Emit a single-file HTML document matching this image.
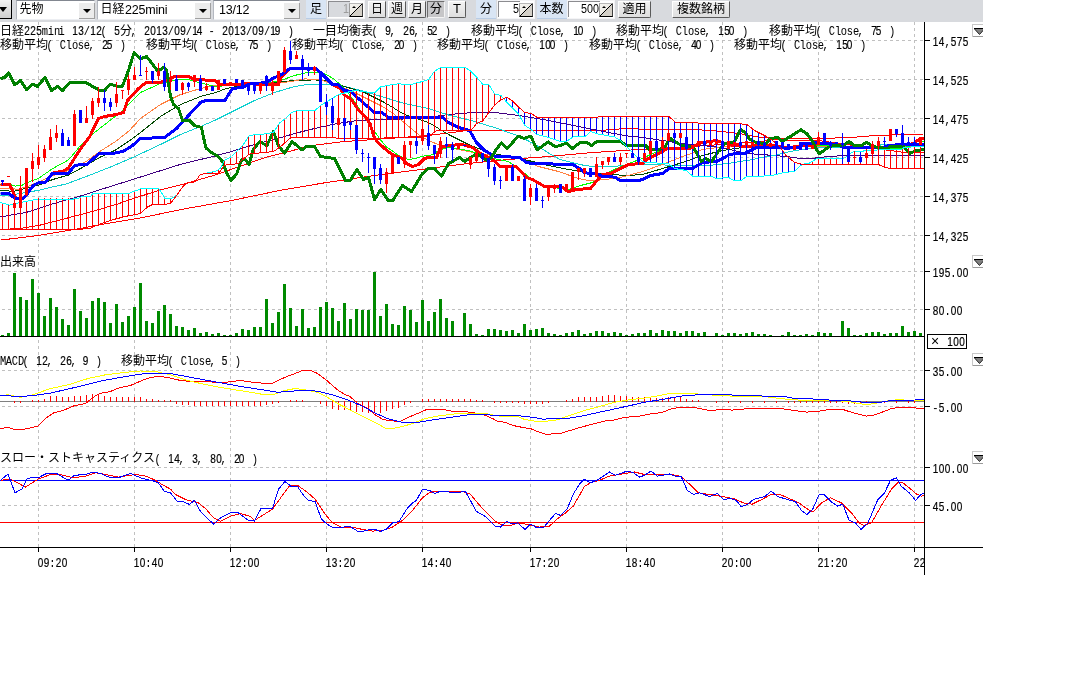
<!DOCTYPE html>
<html lang="ja">
<head>
<meta charset="utf-8">
<title>日経225mini 13/12 チャート</title>
<style>
html,body{margin:0;padding:0;background:#fff}
body{width:1070px;height:690px;overflow:hidden;position:relative;font-family:"Liberation Sans",sans-serif;font-size:12px;color:#000}
#win{position:absolute;left:0;top:0;width:983px;height:580px;overflow:hidden}
#tb{position:absolute;left:0;top:0;width:983px;height:22px;background:#d8dade;will-change:transform}
#tb *{box-sizing:border-box}
#tb>div{position:absolute}
.menu{left:0;top:0;width:12px;height:19px;background:linear-gradient(#f4f4f4,#cfcfcf);border-right:1px solid #000;border-bottom:1px solid #000}
.menu i{position:absolute;left:-1px;top:7px;border:4px solid transparent;border-top:5px solid #000;border-bottom:0}
.combo{top:0;height:20px;background:#fff;border-top:1px solid #828790;border-left:1px solid #b4b8c0;border-right:1px solid #e6e8ec;border-bottom:1px solid #eceef2}
.dd{position:absolute;right:-1px;top:2px;width:16px;height:16px;background:#ececec;border-right:1px solid #a0a0a0;border-bottom:1px solid #a0a0a0}
.dd:after{content:"";position:absolute;left:4px;top:6px;border:4px solid transparent;border-top:4px solid #000;border-bottom:0}
.ct{position:absolute;top:3px;line-height:13px;font-size:12.5px;letter-spacing:-.2px}
.cj{position:absolute;line-height:13px;font-size:12px;white-space:nowrap;font-family:"Liberation Sans","Noto Sans CJK JP",sans-serif}
.bj{font-size:12px;white-space:nowrap;font-family:"Liberation Sans","Noto Sans CJK JP",sans-serif}
.lbl{top:0;height:19px;background:#d9e5f4;border-bottom:1px solid #b9cde6}
.spin{top:0;height:19px;background:#fff;border:1px solid #f4f4f6}
.spin:before{content:"";position:absolute;left:0;top:0;right:14px;bottom:1px;border-top:1px solid #8c8c90;border-left:1px solid #8c8c90}
.spin.dis:before{background:#d8dade}
.sv{position:absolute;right:15px;top:2px;line-height:13px;font-size:12.5px;transform:scaleX(.86);transform-origin:100% 0}
.sb{position:absolute;right:1px;top:2px;width:14px;height:14px;background:linear-gradient(135deg,#f6f5f1 0,#eeece6 46%,#000 46%,#000 53%,#d4d0c8 53%);border-right:1px solid #404040;border-bottom:1px solid #000;border-top:1px solid #b8b8b8;border-left:1px solid #9a9a9a}
.sb:after{content:"";position:absolute;left:2px;top:2px;border:2px solid transparent;border-bottom:2px solid #000;border-top:0}
.btn{top:1px;height:17px;background:linear-gradient(#f2f2f2,#dedede);border-top:1px solid #fff;border-left:1px solid #fff;border-right:1px solid #5a5a5a;border-bottom:1px solid #5a5a5a;border-radius:0 0 2px 0;text-align:center;line-height:14px;font-size:13px}
.btn.on{background:#c6c6c8;border-top:1px solid #6e6e6e;border-left:1px solid #6e6e6e;border-right:1px solid #f4f4f4;border-bottom:1px solid #f4f4f4}
svg{position:absolute;left:0;top:0}
#win>svg{will-change:transform}
.t text{font-family:"Liberation Sans",sans-serif;font-size:12.5px;text-anchor:middle;fill:#000;stroke:#000;stroke-width:.2px}
.t .l{font-family:"Liberation Mono",monospace;font-size:13px;stroke-width:.05px}
.tj text{font-family:"Liberation Sans","Noto Sans CJK JP",sans-serif;font-size:12px;fill:#000}
</style>
</head>
<body>
<div id="win">
<div id="tb">
<div class="menu"><i></i></div>
<div class="combo" style="left:16px;width:79px"><span class="cj" style="left:2.5px;top:1.5px">先物</span><i class="dd"></i></div>
<div class="combo" style="left:97px;width:114px"><span class="cj" style="left:2.5px;top:1.5px">日経</span><span class="ct" style="left:27px">225mini</span><i class="dd"></i></div>
<div class="combo" style="left:213px;width:87px"><span class="ct" style="left:5px">13/12</span><i class="dd"></i></div>
<div class="lbl" style="left:306px;width:20px"><span class="cj" style="left:4px;top:2.5px">足</span></div>
<div class="spin dis" style="left:327px;width:38px"><span class="sv" style="color:#9c9c9c">1</span><i class="sb"></i></div>
<div class="btn" style="left:368px;width:18px"><span class="bj">日</span></div>
<div class="btn" style="left:388px;width:18px"><span class="bj">週</span></div>
<div class="btn" style="left:408px;width:18px"><span class="bj">月</span></div>
<div class="btn on" style="left:427px;width:18px"><span class="bj">分</span></div>
<div class="btn" style="left:448px;width:18px">T</div>
<div class="lbl" style="left:476px;width:20px"><span class="cj" style="left:4px;top:2.5px">分</span></div>
<div class="spin" style="left:497px;width:38px"><span class="sv">5</span><i class="sb"></i></div>
<div class="lbl" style="left:537px;width:30px"><span class="cj" style="left:2.5px;top:2.5px">本数</span></div>
<div class="spin" style="left:567px;width:48px"><span class="sv">500</span><i class="sb"></i></div>
<div class="btn" style="left:618px;width:33px"><span class="bj">適用</span></div>
<div class="btn" style="left:672px;width:58px"><span class="bj">複数銘柄</span></div>
</div>
<svg width="983" height="580" viewBox="0 0 983 580" shape-rendering="crispEdges">
<path d="M2 40.5H924M2 79.5H924M2 118.5H924M2 157.5H924M2 196.5H924M2 235.5H924M2 271.5H924M2 309.5H924M2 370.5H924M2 406.5H924M2 467.5H924M2 505.5H924M38.5 22V547M134.5 22V547M230.5 22V547M326.5 22V547M422.5 22V547M530.5 22V547M626.5 22V547M722.5 22V547M818.5 22V547M914.5 22V547" stroke="#c0c0c0" stroke-width="1" stroke-dasharray="3 3" fill="none"/>
<polyline points="0.5,240.1 38.5,235.5 74.5,229.5 112.5,222.5 140.5,218 181,209.5 231.5,200.5 281.9,190 326.5,182.5 374.5,175.5 428.5,168.5 468.5,163.5 508.5,159.5 548.5,156.5 588.5,152.9 628.5,150.1 642.5,149.5 700.5,146 760.5,141.5 770.5,139.9 790.5,140.1 819.5,140.7 842.5,144 870.5,148 894.2,151 900.8,152 913.5,152.8 924,152.8" fill="none" stroke="#ff0000" stroke-width="1"/>
<polyline points="0.5,229.5 20.5,228.5 40.5,225 58.1,220.5 92.1,211.5 118.3,203.8 130.5,199.5 159.1,190.3 186,183.5 214.5,175.2 231.5,169.3 265.1,157.5 285.3,152.5 310.5,145.7 344.5,141.5 374.5,139.5 428.5,135.5 470.5,130.1 604.5,130.1 628.5,128.3 640.5,129.1 689.5,129.1 722.5,131.5 743.5,134.2 750.5,135.8 762.5,137.5 782.5,138.5 819.5,138.5 851.2,137.5 875.2,135.5 924,134" fill="none" stroke="#ff0000" stroke-width="1"/>
<polyline points="0.5,216.9 26.7,212.3 52.8,203.8 79,196.5 105.2,188.1 130.5,180.2 181,164.2 214.5,156.1 231.5,151.5 254.5,144.5 281.9,137.3 294.5,133.5 314.5,128.5 334.5,124.1 354.5,120.9 374.5,119.5 394.5,119.5 428.5,117.5 448.5,114.5 468.5,112.9 498.5,112.9 518.5,115.5 548.5,120.5 578.5,126.5 608.5,132.5 628.5,136.1 642.5,137.5 662.5,140.5 681.5,143.5 702.2,145.5 722.5,147.7 733,150.2 745.5,153.4 766.1,154.9 786.5,156.5 796.9,158 815.5,158 822.5,157.1 843.5,155.5 924,155.5" fill="none" stroke="#400080" stroke-width="1"/>
<polyline points="0.5,196 13.5,194.5 26.7,192.5 39.8,190 52.8,186.8 65.9,184.1 92.1,174.3 111.7,166.5 130.5,158.5 160.5,144.5 180.5,134.5 200.5,126.5 214.5,120.5 234.5,110.5 254.5,100.5 274.5,92.5 294.5,86.5 310.5,84.1 326.5,84.1 344.5,86.5 364.5,91.5 384.5,97.5 404.5,103.5 428.5,108.5 448.5,115 471.9,120.8 495.1,127.7 518.3,135.9 528.5,141 538.5,146.5 548.5,153 560.5,159.7 570.5,162.2 581.1,164.8 591.3,166.3 601.5,166.9 611.9,166.3 622.2,165.8 632.5,164.8 642.5,164.3 667.5,165.1 691.5,165.7 712.5,165.1 727.5,163.5 743.5,161 750.5,159.9 762.5,157.3 776.5,154.9 786.5,152.4 796.9,150.3 807.2,148.8 818.5,147.8 842.5,147.7 872.5,147.5 880.5,145 900.5,144.7 924,144.5" fill="none" stroke="#10d0d0" stroke-width="1"/>
<polyline points="0.5,190.5 13.5,191.3 26.7,188.1 39.8,184.8 52.8,179.5 68.5,175 85.5,165.8 99.9,157.3 115.5,150.1 131.3,139.5 140.5,132.5 160.5,116.5 180.5,104.5 200.5,96.5 214.5,92.9 226.5,88.5 244.5,84.9 274.5,82.5 294.5,80.5 314.5,79.9 326.5,80.9 344.5,86.5 364.5,92.5 384.5,102.5 404.5,114.5 428.5,122.5 448.5,134.5 468.5,144.5 488.5,152.5 508.5,156.5 528.5,160.5 548.5,165.5 568.5,169.5 588.5,172.5 608.5,174.5 628.5,175.5 642.5,174.5 662.5,168.5 682.5,162.5 702.5,155.5 722.5,150.5 742.5,147.5 770.5,146.5 820.5,146.5 870.5,146.5 924,146.5" fill="none" stroke="#004800" stroke-width="1"/>
<polyline points="0.5,188.7 8.4,188.1 17.5,189.4 26.7,186.8 39.8,181.5 52.8,175.5 65.9,171.7 75.1,167.1 85.5,161.9 99.9,151.5 115.5,141.5 128.7,131.2 140.5,118.5 160.5,104.5 180.5,94.5 200.5,88.5 214.5,85.5 234.5,84.1 264.5,84.1 280.5,82.9 294.5,80.9 304.5,78.9 318.5,79.5 334.5,84.1 350.5,90.5 366.5,98.5 382.5,106.5 394.5,114.5 406.5,124.5 418.5,134.5 428.5,140.5 440.5,145.5 458.5,149.5 478.5,153.5 498.5,156.5 518.5,158.5 538.5,166.5 558.5,171.5 578.5,178.5 588.5,180.5 602.5,179.9 620.5,177.5 642.5,171.5 662.5,164.5 682.5,156.5 702.5,149.5 722.5,146.9 760.5,146.5 820.5,146.5 870.5,147.5 924,146.5" fill="none" stroke="#ff8040" stroke-width="1"/>
<polyline points="0.5,184.5 9.7,184.1 14.9,186.1 21.5,185.5 26.7,182.8 38.5,178.3 52.8,168.5 68.5,159.9 75.1,152.1 81.5,144.2 94.5,132.5 112.5,118.5 120.5,112.5 140.5,92.5 160.5,83.5 174.5,80.1 188.5,79.7 214.5,86.5 230.5,85.5 260.5,84.5 280.5,80.5 294.5,75.5 308.5,72.1 318.5,72.1 326.5,74.5 334.5,79.5 344.5,88.5 348.5,93.5 351.8,97.9 356.2,104 364.5,117.5 373.5,130.5 375.2,132.5 381.3,140.8 386.5,146.9 392.5,151.1 399.8,156.2 408.1,159.3 414.2,158.8 422.5,156.2 432.7,154.7 437.9,151.1 443,149 449.2,147.5 468.5,150.5 488.5,157.5 508.5,161.5 518.5,168.5 528.5,176.5 540.5,184.5 552.5,187.5 568.5,189.5 580.5,185.5 592.5,182.5 604.5,174.5 616.5,168.5 628.5,163.5 642.5,158.5 652.5,153.5 662.5,149.5 690.5,148 700.5,143.5 716.5,141.5 732.5,145.5 762.5,145.5 800.5,146.5 830.5,145.5 860.5,146.5 890.5,148 901.5,148 912.5,145.5 924,140.9" fill="none" stroke="#00ff00" stroke-width="1"/>
<polyline points="0.5,184.8 9.7,184.8 14.9,195.9 16.2,198.5 22.7,198.5 26.7,194.5 33.2,185.5 38.5,182.8 45,182.8 52.8,173 63.3,171.1 68.5,167.8 75.1,157.3 81.5,147.5 89.5,137 98.5,118.5 104.5,116.5 116.5,114.5 123.5,112.5 127.5,100.5 138.5,88.5 145.5,82.9 160.5,82.5 170.5,78.5 174.5,76.5 188.5,76.5 194.5,79.5 214.5,80.5 220.5,84.9 234.5,84.9 246.5,83.5 266.5,84.9 278.5,84.5 281.5,76.5 284.5,73.5 290.5,68.1 315.5,68.1 322.5,74.5 332.5,84.5 340.1,88.3 344.7,95.2 350.5,98.7 354,103.3 358.5,110.3 365.5,117.2 370.2,124.2 373.7,135.8 377.2,141.5 384.5,148.5 390.5,153.2 394.5,155.5 402.5,158.5 406.5,163.5 412.5,166.5 418.5,164.5 424.5,158.5 428.5,157.5 436.5,157.5 440.5,147.5 448.5,145.5 462.5,144.5 472.5,147.5 480.5,153.5 492.5,159.5 500.5,166.5 516.5,166.9 526.5,177.5 532.5,179.5 544.5,186.5 560.5,186.1 568.5,191.5 576.5,189.5 590.5,188.5 598.5,178.5 602.5,174.5 610.5,173.5 620.5,168.5 628.5,164.5 642.5,163.5 648.5,158.5 660.5,152.5 667.5,148.5 690.5,148.1 700.5,142.9 716.5,140.5 722.5,142.5 732.5,145.5 746.5,146.5 762.5,145.5 778.5,146.1 786.5,147.5 794.8,146.9 803.1,145.2 813.5,145.2 818.5,143.1 836.5,144.3 842.5,146.9 846,147.7 884.5,148 887.5,145.9 897.1,144.8 910.5,144.5 915,142.5 920,138.5 924,138.5" fill="none" stroke="#ff0000" stroke-width="2.2" stroke-linejoin="round" shape-rendering="auto"/>
<polyline points="0.5,184.8 9.7,184.8 14.9,195.9 16.2,198.5 22.7,198.5 26.7,194.5 33.2,185.5 38.5,182.8 45,182.8 52.8,173 63.3,171.1 68.5,167.8 75.1,157.3 81.5,147.5 89.5,137 98.5,118.5 104.5,116.5 116.5,114.5 123.5,112.5 127.5,100.5 138.5,88.5 145.5,82.9 160.5,82.5 170.5,78.5 174.5,76.5 188.5,76.5 194.5,79.5 214.5,80.5 220.5,84.9 234.5,84.9 246.5,83.5 266.5,84.9 278.5,84.5 281.5,76.5 284.5,73.5 290.5,68.1 315.5,68.1 322.5,74.5 332.5,84.5 340.1,88.3 344.7,95.2 350.5,98.7 354,103.3 358.5,110.3 365.5,117.2 370.2,124.2 373.7,135.8 377.2,141.5 384.5,148.5 390.5,153.2 394.5,155.5 402.5,158.5 406.5,163.5 412.5,166.5 418.5,164.5 424.5,158.5 428.5,157.5 436.5,157.5 440.5,147.5 448.5,145.5 462.5,144.5 472.5,147.5 480.5,153.5 492.5,159.5 500.5,166.5 516.5,166.9 526.5,177.5 532.5,179.5 544.5,186.5 560.5,186.1 568.5,191.5 576.5,189.5 590.5,188.5 598.5,178.5 602.5,174.5 610.5,173.5 620.5,168.5 628.5,164.5 642.5,163.5 648.5,158.5 660.5,152.5 667.5,148.5 690.5,148.1 700.5,142.9 716.5,140.5 722.5,142.5 732.5,145.5 746.5,146.5 762.5,145.5 778.5,146.1 786.5,147.5 794.8,146.9 803.1,145.2 813.5,145.2 818.5,143.1 836.5,144.3 842.5,146.9 846,147.7 884.5,148 887.5,145.9 897.1,144.8 910.5,144.5 915,142.5 920,138.5 924,138.5" fill="none" stroke="#ff0000" stroke-width="3" stroke-linejoin="round"/>
<polyline points="0.5,193.3 9,193.3 14.9,198.5 22.7,198.5 26.7,194.5 33.2,185.5 38.5,182.8 45,182.8 52.8,173 68.5,173 75.1,165.2 86.9,164.5 98.5,154 111.5,153.8 123.5,151.2 132.5,145.5 140.5,138.5 164.5,137.5 176.5,128.5 200.5,102.5 204.5,100.9 224.5,100.9 232.5,88.5 242.5,87.5 249.5,84.1 266.5,82.5 272.5,78.5 282.5,74.1 290.5,68.1 315.5,68.1 322.5,74.5 332.5,84.5 338.5,84.9 344.5,90.5 350.5,91.5 374.5,112.5 382.5,112.9 388.5,117.5 442.5,117.5 448.5,122.5 458.5,127.5 469.5,130.5 476.5,142.5 484.5,150.5 494.5,156.1 519.5,157.5 526.5,162.5 532.5,163.5 572.5,164.5 579.5,168.5 584.5,172.9 596.5,173.5 602.5,176.5 614.5,177.1 620.5,180.5 638.5,180.5 642.5,179.5 650.5,175.5 662.5,173.5 669.5,168.5 692.5,168.5 702.5,162.5 716.5,161.5 722.5,158.5 730.5,154.1 744.5,153.5 756.5,147.5 788.5,148.1 800.5,147.5 802.5,143.5 816.5,142.9 836.5,144.3 842.5,146.9 846,147.7 884.5,148 887.5,145.9 897.1,144.8 924,144.3" fill="none" stroke="#0000ff" stroke-width="2.2" stroke-linejoin="round" shape-rendering="auto"/>
<polyline points="0.5,193.3 9,193.3 14.9,198.5 22.7,198.5 26.7,194.5 33.2,185.5 38.5,182.8 45,182.8 52.8,173 68.5,173 75.1,165.2 86.9,164.5 98.5,154 111.5,153.8 123.5,151.2 132.5,145.5 140.5,138.5 164.5,137.5 176.5,128.5 200.5,102.5 204.5,100.9 224.5,100.9 232.5,88.5 242.5,87.5 249.5,84.1 266.5,82.5 272.5,78.5 282.5,74.1 290.5,68.1 315.5,68.1 322.5,74.5 332.5,84.5 338.5,84.9 344.5,90.5 350.5,91.5 374.5,112.5 382.5,112.9 388.5,117.5 442.5,117.5 448.5,122.5 458.5,127.5 469.5,130.5 476.5,142.5 484.5,150.5 494.5,156.1 519.5,157.5 526.5,162.5 532.5,163.5 572.5,164.5 579.5,168.5 584.5,172.9 596.5,173.5 602.5,176.5 614.5,177.1 620.5,180.5 638.5,180.5 642.5,179.5 650.5,175.5 662.5,173.5 669.5,168.5 692.5,168.5 702.5,162.5 716.5,161.5 722.5,158.5 730.5,154.1 744.5,153.5 756.5,147.5 788.5,148.1 800.5,147.5 802.5,143.5 816.5,142.9 836.5,144.3 842.5,146.9 846,147.7 884.5,148 887.5,145.9 897.1,144.8 924,144.3" fill="none" stroke="#0000ff" stroke-width="3" stroke-linejoin="round"/>
<polyline points="0.5,78.5 4.5,77.5 8.9,72.9 14.5,84.9 20.5,80.5 26.5,89.5 32.5,84.1 37.5,86.5 44.9,77.5 51.5,90.5 57.5,86.5 62.5,90.5 69.5,82.9 86.5,82.9 94.5,87.5 100.5,90.9 104.5,90.5 110.5,84.1 117.5,86.5 122.5,86.1 128.5,70.5 134.1,52.5 140.5,58.9 146.5,56.5 150.5,61.5 158,71.5 164,67 166.5,70.5 168,78.5 169.5,90.5 171,97.5 173.5,104.5 178.5,108.5 182.5,120.5 189.5,120.5 194.5,125.5 201.5,127.5 203.5,137.5 206,148 211.5,152.5 218,156.5 222.5,161.5 226.5,172.5 230.9,180.2 236.5,174.3 241.5,160 244.9,158.9 249.1,164.5 253.3,149.1 260,141.5 266.8,145.7 273.5,131.5 278.5,145.7 284.5,153.3 292,141.5 302.1,149.9 306.5,146.5 314.5,146.5 320.5,156.5 334.5,158.5 345.5,180.5 350.5,180.1 356.9,169.5 363.5,179.5 368.5,177.5 374.5,199.5 380.9,189.5 388.5,200.9 392.5,200.9 402.5,185.5 411.5,191.5 422.5,173.5 428.5,168.5 434.5,168.5 441.5,176.1 448.5,163.5 455.5,159.8 459.5,157.5 464.8,161.5 470.5,157.5 476.4,154 482.2,156.9 486.8,160.5 491.5,157.5 496.1,149.5 501.3,143 507.1,148.8 518.1,136.1 523.9,138.4 530.8,136.1 537.2,150 548.2,141.9 555.2,146.5 560.5,145.5 566.5,142.9 572.5,148.5 580.5,142.1 586.5,142.1 591.5,145.5 596.5,141.7 621.2,141.7 626.3,145.8 645.8,145.8 649.9,149.9 659.2,149.9 665.5,145.8 670.3,138.4 675.5,141.9 681.5,145.5 691.9,146.5 696,151.2 701.2,161.5 705.3,158.4 711.5,161.5 716.5,154.3 722.7,145 727.9,142.5 734.1,141.9 740.7,129.5 745.5,132.8 749.5,139 755.8,142.5 766.1,143.5 770.2,138.5 777.4,137.5 782.5,141.1 788.7,137.5 801,129.8 807.2,133.9 812.3,141.1 817.5,151.3 819.5,153.9 827.7,147.7 832.9,145.2 843.2,145.2 849.3,141.5 853.5,145.2 861.2,145.9 866.5,142.1 873.1,146.5 887.5,148.8 890.5,146.5 903.5,146.5 909.5,153.5 916.2,150.5 924,149.5" fill="none" stroke="#008000" stroke-width="2.2" stroke-linejoin="round" shape-rendering="auto"/>
<polyline points="0.5,78.5 4.5,77.5 8.9,72.9 14.5,84.9 20.5,80.5 26.5,89.5 32.5,84.1 37.5,86.5 44.9,77.5 51.5,90.5 57.5,86.5 62.5,90.5 69.5,82.9 86.5,82.9 94.5,87.5 100.5,90.9 104.5,90.5 110.5,84.1 117.5,86.5 122.5,86.1 128.5,70.5 134.1,52.5 140.5,58.9 146.5,56.5 150.5,61.5 158,71.5 164,67 166.5,70.5 168,78.5 169.5,90.5 171,97.5 173.5,104.5 178.5,108.5 182.5,120.5 189.5,120.5 194.5,125.5 201.5,127.5 203.5,137.5 206,148 211.5,152.5 218,156.5 222.5,161.5 226.5,172.5 230.9,180.2 236.5,174.3 241.5,160 244.9,158.9 249.1,164.5 253.3,149.1 260,141.5 266.8,145.7 273.5,131.5 278.5,145.7 284.5,153.3 292,141.5 302.1,149.9 306.5,146.5 314.5,146.5 320.5,156.5 334.5,158.5 345.5,180.5 350.5,180.1 356.9,169.5 363.5,179.5 368.5,177.5 374.5,199.5 380.9,189.5 388.5,200.9 392.5,200.9 402.5,185.5 411.5,191.5 422.5,173.5 428.5,168.5 434.5,168.5 441.5,176.1 448.5,163.5 455.5,159.8 459.5,157.5 464.8,161.5 470.5,157.5 476.4,154 482.2,156.9 486.8,160.5 491.5,157.5 496.1,149.5 501.3,143 507.1,148.8 518.1,136.1 523.9,138.4 530.8,136.1 537.2,150 548.2,141.9 555.2,146.5 560.5,145.5 566.5,142.9 572.5,148.5 580.5,142.1 586.5,142.1 591.5,145.5 596.5,141.7 621.2,141.7 626.3,145.8 645.8,145.8 649.9,149.9 659.2,149.9 665.5,145.8 670.3,138.4 675.5,141.9 681.5,145.5 691.9,146.5 696,151.2 701.2,161.5 705.3,158.4 711.5,161.5 716.5,154.3 722.7,145 727.9,142.5 734.1,141.9 740.7,129.5 745.5,132.8 749.5,139 755.8,142.5 766.1,143.5 770.2,138.5 777.4,137.5 782.5,141.1 788.7,137.5 801,129.8 807.2,133.9 812.3,141.1 817.5,151.3 819.5,153.9 827.7,147.7 832.9,145.2 843.2,145.2 849.3,141.5 853.5,145.2 861.2,145.9 866.5,142.1 873.1,146.5 887.5,148.8 890.5,146.5 903.5,146.5 909.5,153.5 916.2,150.5 924,149.5" fill="none" stroke="#008000" stroke-width="3" stroke-linejoin="round"/>
<path d="M2.5 203V230M8.5 204V230M14.5 203V230M20.5 202V230M26.5 201V230M32.5 200V230M38.5 198V230M44.5 198V230M50.5 198V230M56.5 198V230M62.5 198V230M68.5 198V230M74.5 198V230M80.5 197V230M86.5 196V229M92.5 193V228M98.5 193V225M104.5 193V223M110.5 193V221M116.5 193V219M122.5 193V218M128.5 193V216M134.5 191V215M140.5 188V214M146.5 188V208M152.5 188V205M158.5 188V205M164.5 197V205M170.5 198V204M212.5 171V174M218.5 169V174M224.5 160V166M230.5 157V165M236.5 151V164M242.5 145V160M248.5 136V155M254.5 134V154M260.5 134V153M266.5 133V153M272.5 132V152M278.5 124V149M284.5 119V144M290.5 113V138M296.5 110V138M302.5 110V138M308.5 110V138M314.5 110V138M320.5 105V138M326.5 101V138M332.5 98V138M338.5 94V139M344.5 92V139M350.5 91V139M356.5 90V139M362.5 91V139M368.5 92V139M374.5 92V139M380.5 86V139M386.5 85V138M392.5 84V138M398.5 83V138M404.5 84V138M410.5 84V138M416.5 82V138M422.5 81V137M428.5 79V137M434.5 71V133M440.5 67V131M446.5 67V131M452.5 67V131M458.5 67V131M464.5 67V131M470.5 71V131M476.5 77V124M482.5 84V121M488.5 84V113M494.5 93V106M500.5 95V101M812.5 161V165M818.5 158V165M824.5 158V165M830.5 158V165M836.5 158V165M842.5 158V165M848.5 154V165M854.5 151V165M860.5 151V165M866.5 150V165M872.5 150V165M878.5 149V165M884.5 149V168M890.5 149V169M896.5 149V169M902.5 148V169M908.5 147V169M914.5 146V169M920.5 146V169" stroke="#ff0000" stroke-width="1" fill="none"/>
<path d="M506.5 97V103M512.5 101V109M518.5 106V115M524.5 112V125M530.5 113V130M536.5 116V135M542.5 117V136M548.5 117V138M554.5 117V140M560.5 117V142M566.5 117V142M572.5 117V138M578.5 117V137M584.5 117V137M590.5 117V132M596.5 117V134M602.5 117V135M608.5 116V136M614.5 116V137M620.5 116V141M626.5 116V147M632.5 116V153M638.5 116V159M644.5 116V163M650.5 116V163M656.5 116V163M662.5 116V164M668.5 116V164M674.5 121V169M680.5 122V170M686.5 122V171M692.5 122V177M698.5 123V177M704.5 123V177M710.5 123V177M716.5 123V179M722.5 123V179M728.5 123V178M734.5 123V181M740.5 123V181M746.5 124V177M752.5 128V177M758.5 132V177M764.5 135V176M770.5 139V176M776.5 143V175M782.5 150V173M788.5 157V173M794.5 162V172M800.5 163V166" stroke="#0000ff" stroke-width="1" fill="none"/>
<polyline points="0.5,202.5 9.7,205.1 20.1,202.5 38.5,199 73.5,199 77.5,198.7 81.5,196.6 90.5,196.6 93,193.1 129.5,193.1 135.1,191 140.5,188.9 159.1,188.9 165,198.5 170.9,198.5 176.5,195.5 182.5,187 187.5,182.5 195.5,181.9 199.5,175.2 204.5,173.5 214.5,171.5 219.5,169.5 224.5,160.5 231.5,156.5 238.2,149.9 243.2,144.9 249.1,135.5 255,134.8 261.5,134.5 273.5,132.3 279.5,123 285.5,118.5 291.5,112.5 296.5,110.9 314.5,110.9 320.5,105.5 338.5,94.5 354.5,90.5 374.5,93 380.5,87 386.5,85.7 392.5,84.4 399.5,83.8 404.8,84.7 410.9,84.7 417,82.7 423.1,81.5 428.5,79.5 434.5,71.3 440.9,67.3 464.9,67.3 470.9,71.3 476.9,77.5 482.9,84.5 488.9,84.9 494.9,94.1 500.9,95.5 506.9,102.5 512.9,108.5 518.9,114.5 524.9,125.5 530.9,129.5 536.9,134.5 548.9,137.5 560.5,141.5 566.5,141.5 572.9,136.9 584.5,136.9 590.9,131.5 598.5,134.1 614.5,136.9 620.5,140.5 632.5,152.5 638.5,158.5 644.5,162.5 668.5,163.5 674.5,168.5 686.5,170.5 692.5,176.1 710.5,176.1 716.5,178.5 728.5,177.5 734.5,180.9 740.5,180.9 746.5,176.5 770.5,175.8 782.5,172.8 794.5,171.3 801.9,164.5 809.4,163.1 816.9,158.5 844.9,158 847.2,155.9 851.9,152.5 854.3,151.7 862.5,151.7 864.5,150.3 875.5,150.3 878.5,149.8 888.5,149.5 901.5,149.5 904.5,147.1 924,146.8" fill="none" stroke="#00ffff" stroke-width="1"/>
<polyline points="0.5,229.5 76.2,229.8 90.2,228.2 98.5,224.7 112.5,219.8 126.5,216.2 140.5,213.5 147.3,207.1 152.5,204.5 165,204.5 170.9,202.9 176.5,195.5 182.5,187 187.5,182.5 195.5,181.9 199.5,175.2 204.5,173.5 218.5,173.5 224.5,165.1 231.5,164.5 238.2,163.5 249.1,154.1 273.5,151.5 279.5,147.5 291.2,137.3 310.5,137.3 354.5,138.5 414.5,137.5 428.5,136.5 436.5,130.5 471.3,130.1 476.5,123.7 482.9,120.8 488.7,112.7 495.1,104.5 500.9,99.9 506.7,97 512.5,101.1 524.6,112.7 531,113.3 536.8,117.1 669.5,116.9 675.5,122.5 746.5,124.1 754.5,130.5 766.5,136.5 772.5,140.5 779.5,145.9 785.5,154.9 794.5,162.4 803.5,164.5 878.2,164.5 884.1,166.9 890.1,168.5 924,168.5" fill="none" stroke="#ff0000" stroke-width="1"/>
<path d="M7 176h3V177h-3ZM13 203h3V208h-3ZM14 197h1V203h-1ZM19 188h3V208h-3ZM20 176h1V188h-1ZM25 168h3V195h-3ZM26 195h1V196h-1ZM31 161h3V169h-3ZM32 153h1V161h-1ZM32 169h1V182h-1ZM37 157h3V165h-3ZM38 145h1V157h-1ZM38 165h1V169h-1ZM43 149h3V158h-3ZM44 145h1V149h-1ZM44 158h1V162h-1ZM49 137h3V150h-3ZM50 129h1V137h-1ZM55 133h3V138h-3ZM56 125h1V133h-1ZM56 138h1V142h-1ZM73 114h3V146h-3ZM74 110h1V114h-1ZM85 118h3V123h-3ZM86 106h1V118h-1ZM91 101h3V115h-3ZM92 98h1V101h-1ZM92 115h1V119h-1ZM97 98h3V103h-3ZM98 87h1V98h-1ZM98 103h1V107h-1ZM115 94h3V103h-3ZM116 82h1V94h-1ZM116 103h1V107h-1ZM121 90h3V91h-3ZM122 91h1V99h-1ZM127 79h3V90h-3ZM128 75h1V79h-1ZM128 90h1V95h-1ZM133 75h3V80h-3ZM134 67h1V75h-1ZM145 71h3V72h-3ZM146 67h1V71h-1ZM146 72h1V80h-1ZM157 71h3V76h-3ZM158 63h1V71h-1ZM158 76h1V80h-1ZM169 79h3V82h-3ZM170 71h1V79h-1ZM170 82h1V90h-1ZM181 83h3V90h-3ZM182 82h1V83h-1ZM182 90h1V95h-1ZM193 75h3V82h-3ZM194 82h1V87h-1ZM205 86h3V90h-3ZM206 83h1V86h-1ZM206 90h1V91h-1ZM217 80h3V90h-3ZM229 82h3V86h-3ZM259 83h3V91h-3ZM260 91h1V94h-1ZM271 82h3V91h-3ZM272 80h1V82h-1ZM272 91h1V95h-1ZM277 71h3V86h-3ZM283 50h3V72h-3ZM284 47h1V50h-1ZM284 72h1V73h-1ZM295 55h3V59h-3ZM296 51h1V55h-1ZM313 67h3V71h-3ZM314 66h1V67h-1ZM314 71h1V75h-1ZM337 118h3V125h-3ZM385 172h3V184h-3ZM386 168h1V172h-1ZM386 184h1V193h-1ZM391 156h3V173h-3ZM403 145h3V164h-3ZM404 141h1V145h-1ZM404 164h1V168h-1ZM409 141h3V145h-3ZM410 145h1V158h-1ZM421 129h3V141h-3ZM422 124h1V129h-1ZM422 141h1V145h-1ZM439 141h3V154h-3ZM440 137h1V141h-1ZM440 154h1V158h-1ZM457 146h3V149h-3ZM469 157h3V165h-3ZM470 165h1V169h-1ZM475 153h3V161h-3ZM476 152h1V153h-1ZM476 161h1V162h-1ZM505 166h3V181h-3ZM517 176h3V181h-3ZM529 188h3V197h-3ZM530 184h1V188h-1ZM530 197h1V205h-1ZM547 187h3V197h-3ZM548 197h1V201h-1ZM553 185h3V189h-3ZM554 184h1V185h-1ZM554 189h1V193h-1ZM565 184h3V192h-3ZM571 172h3V190h-3ZM577 168h3V172h-3ZM578 172h1V180h-1ZM583 168h3V173h-3ZM584 173h1V177h-1ZM595 164h3V177h-3ZM596 157h1V164h-1ZM601 161h3V165h-3ZM602 165h1V169h-1ZM607 157h3V162h-3ZM608 162h1V165h-1ZM619 157h3V162h-3ZM620 153h1V157h-1ZM620 162h1V165h-1ZM625 153h3V154h-3ZM626 154h1V158h-1ZM643 153h3V161h-3ZM649 141h3V154h-3ZM650 154h1V155h-1ZM661 141h3V149h-3ZM662 137h1V141h-1ZM667 133h3V141h-3ZM668 130h1V133h-1ZM679 133h3V138h-3ZM691 145h3V149h-3ZM697 141h3V146h-3ZM709 141h3V145h-3ZM715 141h3V144h-3ZM727 141h3V149h-3ZM733 142h3V146h-3ZM745 141h3V145h-3ZM751 142h3V146h-3ZM769 143h3V147h-3ZM793 145h3V150h-3ZM811 145h3V149h-3ZM817 137h3V145h-3ZM818 132h1V137h-1ZM853 157h3V158h-3ZM854 151h1V157h-1ZM865 153h3V158h-3ZM866 149h1V153h-1ZM871 144h3V154h-3ZM872 141h1V144h-1ZM877 141h3V146h-3ZM878 137h1V141h-1ZM878 146h1V150h-1ZM889 129h3V141h-3ZM919 138h3V145h-3Z" fill="#ff0000"/>
<path d="M1 180h3V182h-3ZM2 182h1V185h-1ZM61 133h3V146h-3ZM62 129h1V133h-1ZM67 140h3V146h-3ZM68 137h1V140h-1ZM79 110h3V123h-3ZM103 98h3V103h-3ZM104 90h1V98h-1ZM104 103h1V111h-1ZM109 102h3V107h-3ZM110 98h1V102h-1ZM110 107h1V111h-1ZM139 75h3V76h-3ZM140 55h1V75h-1ZM151 71h3V80h-3ZM152 80h1V83h-1ZM163 71h3V87h-3ZM164 63h1V71h-1ZM164 87h1V91h-1ZM175 79h3V91h-3ZM176 75h1V79h-1ZM187 83h3V87h-3ZM188 82h1V83h-1ZM188 87h1V91h-1ZM199 79h3V91h-3ZM200 75h1V79h-1ZM211 86h3V91h-3ZM223 79h3V84h-3ZM235 79h3V83h-3ZM241 80h3V87h-3ZM247 85h3V91h-3ZM248 91h1V95h-1ZM253 85h3V91h-3ZM254 91h1V94h-1ZM265 76h3V86h-3ZM266 75h1V76h-1ZM266 86h1V91h-1ZM289 51h3V60h-3ZM290 41h1V51h-1ZM290 60h1V64h-1ZM301 59h3V69h-3ZM302 55h1V59h-1ZM302 69h1V80h-1ZM307 67h3V71h-3ZM308 63h1V67h-1ZM308 71h1V76h-1ZM319 71h3V102h-3ZM325 102h3V107h-3ZM326 94h1V102h-1ZM326 107h1V115h-1ZM331 106h3V123h-3ZM332 98h1V106h-1ZM332 123h1V130h-1ZM343 118h3V126h-3ZM344 126h1V141h-1ZM349 122h3V125h-3ZM350 125h1V130h-1ZM355 125h3V150h-3ZM356 150h1V154h-1ZM361 153h3V154h-3ZM362 149h1V153h-1ZM362 154h1V162h-1ZM367 157h3V158h-3ZM368 153h1V157h-1ZM368 158h1V173h-1ZM373 157h3V169h-3ZM374 169h1V184h-1ZM379 168h3V180h-3ZM380 164h1V168h-1ZM380 180h1V184h-1ZM397 157h3V164h-3ZM415 141h3V146h-3ZM416 137h1V141h-1ZM416 146h1V154h-1ZM427 133h3V146h-3ZM428 125h1V133h-1ZM428 146h1V150h-1ZM433 145h3V154h-3ZM434 154h1V164h-1ZM445 144h3V146h-3ZM446 137h1V144h-1ZM446 146h1V158h-1ZM451 145h3V150h-3ZM452 142h1V145h-1ZM452 150h1V161h-1ZM463 145h3V146h-3ZM481 153h3V159h-3ZM482 159h1V162h-1ZM487 158h3V169h-3ZM488 169h1V177h-1ZM493 167h3V181h-3ZM494 164h1V167h-1ZM494 181h1V185h-1ZM499 180h3V181h-3ZM500 176h1V180h-1ZM500 181h1V189h-1ZM511 167h3V181h-3ZM512 164h1V167h-1ZM523 179h3V201h-3ZM524 176h1V179h-1ZM535 188h3V201h-3ZM536 184h1V188h-1ZM541 200h3V201h-3ZM542 196h1V200h-1ZM542 201h1V208h-1ZM559 184h3V193h-3ZM589 168h3V177h-3ZM613 157h3V162h-3ZM614 153h1V157h-1ZM631 153h3V158h-3ZM632 149h1V153h-1ZM637 157h3V162h-3ZM638 162h1V165h-1ZM655 141h3V150h-3ZM673 133h3V138h-3ZM685 137h3V149h-3ZM703 141h3V145h-3ZM721 141h3V149h-3ZM739 142h3V146h-3ZM757 141h3V145h-3ZM763 143h3V147h-3ZM775 141h3V148h-3ZM781 142h3V147h-3ZM787 144h3V148h-3ZM799 142h3V150h-3ZM805 145h3V150h-3ZM823 133h3V144h-3ZM829 142h3V146h-3ZM830 141h1V142h-1ZM830 146h1V150h-1ZM835 142h3V144h-3ZM841 143h3V145h-3ZM842 133h1V143h-1ZM842 145h1V164h-1ZM847 146h3V162h-3ZM859 157h3V162h-3ZM860 152h1V157h-1ZM860 162h1V163h-1ZM883 141h3V142h-3ZM884 137h1V141h-1ZM884 142h1V147h-1ZM895 129h3V134h-3ZM896 134h1V137h-1ZM901 133h3V144h-3ZM902 125h1V133h-1ZM902 144h1V146h-1ZM907 142h3V146h-3ZM908 137h1V142h-1ZM913 142h3V146h-3ZM914 137h1V142h-1Z" fill="#0000ff"/>
<path d="M1 335h3V336h-3ZM7 333h3V336h-3ZM13 273h3V336h-3ZM19 297h3V336h-3ZM25 300h3V336h-3ZM31 279h3V336h-3ZM37 293h3V336h-3ZM43 316h3V336h-3ZM49 298h3V336h-3ZM55 307h3V336h-3ZM61 319h3V336h-3ZM67 325h3V336h-3ZM73 289h3V336h-3ZM79 311h3V336h-3ZM85 318h3V336h-3ZM91 301h3V336h-3ZM97 298h3V336h-3ZM103 302h3V336h-3ZM109 323h3V336h-3ZM115 304h3V336h-3ZM121 322h3V336h-3ZM127 316h3V336h-3ZM133 307h3V336h-3ZM139 283h3V336h-3ZM145 321h3V336h-3ZM151 323h3V336h-3ZM157 311h3V336h-3ZM163 305h3V336h-3ZM169 314h3V336h-3ZM175 326h3V336h-3ZM181 327h3V336h-3ZM187 330h3V336h-3ZM193 328h3V336h-3ZM199 333h3V336h-3ZM205 332h3V336h-3ZM211 334h3V336h-3ZM217 333h3V336h-3ZM223 335h3V336h-3ZM229 335h3V336h-3ZM235 333h3V336h-3ZM241 329h3V336h-3ZM247 330h3V336h-3ZM253 327h3V336h-3ZM259 327h3V336h-3ZM265 299h3V336h-3ZM271 323h3V336h-3ZM277 312h3V336h-3ZM283 284h3V336h-3ZM289 308h3V336h-3ZM295 326h3V336h-3ZM301 309h3V336h-3ZM307 328h3V336h-3ZM313 327h3V336h-3ZM319 307h3V336h-3ZM325 302h3V336h-3ZM331 308h3V336h-3ZM337 321h3V336h-3ZM343 303h3V336h-3ZM349 319h3V336h-3ZM355 309h3V336h-3ZM361 310h3V336h-3ZM367 310h3V336h-3ZM373 272h3V336h-3ZM379 316h3V336h-3ZM385 304h3V336h-3ZM391 324h3V336h-3ZM397 325h3V336h-3ZM403 306h3V336h-3ZM409 310h3V336h-3ZM415 322h3V336h-3ZM421 300h3V336h-3ZM427 321h3V336h-3ZM433 312h3V336h-3ZM439 299h3V336h-3ZM445 318h3V336h-3ZM451 321h3V336h-3ZM463 313h3V336h-3ZM469 324h3V336h-3ZM475 334h3V336h-3ZM481 335h3V336h-3ZM487 329h3V336h-3ZM493 329h3V336h-3ZM499 330h3V336h-3ZM505 331h3V336h-3ZM511 330h3V336h-3ZM517 333h3V336h-3ZM523 324h3V336h-3ZM529 330h3V336h-3ZM535 329h3V336h-3ZM541 328h3V336h-3ZM547 333h3V336h-3ZM553 334h3V336h-3ZM559 335h3V336h-3ZM565 333h3V336h-3ZM571 332h3V336h-3ZM577 330h3V336h-3ZM583 334h3V336h-3ZM589 333h3V336h-3ZM595 331h3V336h-3ZM601 331h3V336h-3ZM607 333h3V336h-3ZM613 332h3V336h-3ZM619 333h3V336h-3ZM625 335h3V336h-3ZM631 334h3V336h-3ZM637 333h3V336h-3ZM643 333h3V336h-3ZM649 330h3V336h-3ZM655 333h3V336h-3ZM661 330h3V336h-3ZM667 331h3V336h-3ZM673 331h3V336h-3ZM679 333h3V336h-3ZM685 331h3V336h-3ZM691 331h3V336h-3ZM697 333h3V336h-3ZM703 332h3V336h-3ZM715 333h3V336h-3ZM721 335h3V336h-3ZM727 333h3V336h-3ZM733 333h3V336h-3ZM739 334h3V336h-3ZM745 333h3V336h-3ZM751 332h3V336h-3ZM757 334h3V336h-3ZM763 334h3V336h-3ZM769 335h3V336h-3ZM781 335h3V336h-3ZM787 332h3V336h-3ZM793 335h3V336h-3ZM799 335h3V336h-3ZM805 334h3V336h-3ZM811 335h3V336h-3ZM817 332h3V336h-3ZM823 333h3V336h-3ZM829 333h3V336h-3ZM841 321h3V336h-3ZM847 328h3V336h-3ZM853 335h3V336h-3ZM859 335h3V336h-3ZM865 333h3V336h-3ZM871 332h3V336h-3ZM877 332h3V336h-3ZM883 334h3V336h-3ZM889 333h3V336h-3ZM895 333h3V336h-3ZM901 326h3V336h-3ZM907 332h3V336h-3ZM913 331h3V336h-3ZM919 333h3V336h-3Z" fill="#008a00"/>
<path d="M0 336.5H924" stroke="#000" stroke-width="1"/>
<path d="M0 401.5H924" stroke="#808080" stroke-width="1"/>
<path d="M14.5 401V403M20.5 401V403M32.5 400V402M38.5 400V402M44.5 399V402M50.5 396V402M56.5 396V402M62.5 397V402M68.5 397V402M74.5 396V402M80.5 396V402M86.5 395V402M92.5 394V402M98.5 394V402M104.5 396V402M110.5 397V402M116.5 397V402M122.5 397V402M128.5 397V402M134.5 397V402M140.5 397V402M146.5 399V402M152.5 399V402M158.5 400V402M164.5 400V402M170.5 400V402M176.5 401V404M182.5 401V405M188.5 401V405M194.5 401V406M200.5 401V406M206.5 401V406M212.5 401V406M218.5 401V406M224.5 401V406M230.5 401V406M236.5 401V406M242.5 401V406M248.5 401V406M254.5 401V406M260.5 401V406M266.5 401V405M272.5 401V404M278.5 401V403M290.5 400V402M296.5 400V402M302.5 400V402M320.5 401V404M326.5 401V406M332.5 401V409M338.5 401V410M344.5 401V410M350.5 401V410M356.5 401V412M362.5 401V412M368.5 401V413M374.5 401V413M380.5 401V413M386.5 401V411M392.5 401V409M398.5 401V408M404.5 401V405M410.5 401V403M422.5 399V402M428.5 399V402M434.5 399V402M440.5 399V402M446.5 399V402M452.5 399V402M458.5 399V402M464.5 399V402M470.5 399V402M476.5 400V402M482.5 400V402M494.5 401V403M500.5 401V403M506.5 401V403M512.5 401V403M518.5 401V403M524.5 401V404M530.5 401V404M536.5 401V404M542.5 401V404M548.5 401V403M566.5 400V402M572.5 399V402M578.5 397V402M584.5 397V402M590.5 397V402M596.5 397V402M602.5 396V402M608.5 395V402M614.5 395V402M620.5 396V402M626.5 396V402M632.5 397V402M638.5 397V402M644.5 397V402M650.5 397V402M656.5 398V402M662.5 398V402M668.5 397V402M674.5 397V402M680.5 397V402M686.5 399V402M692.5 400V402M698.5 400V402M716.5 401V403M728.5 401V403M740.5 401V403M752.5 401V403M764.5 401V403M776.5 401V403M788.5 401V403M794.5 401V403M800.5 401V403M806.5 401V403M812.5 401V403M818.5 401V403M824.5 401V403M830.5 401V403M836.5 401V403M842.5 401V403M848.5 401V404M854.5 401V404M860.5 401V404M866.5 401V403M884.5 401V403M896.5 401V403M908.5 401V403M914.5 401V403" stroke="#ff0000" stroke-width="1" fill="none"/>
<polyline points="0.5,428.5 8,427.5 15.5,429.9 23,429.5 38.1,426.1 45.5,418.5 53.1,413.1 63.1,410.5 73.1,406.1 85.5,403.5 93.2,397.3 99.5,393.5 110.5,391.5 118.2,388.1 130.5,385.5 140.5,381.1 150.5,377.3 160.5,376.5 170.5,378.1 180.5,380.5 190.5,381.5 200.5,381.1 215.5,382.3 225.5,382.3 240.5,380.5 253.5,382.3 262.5,383.1 272.5,383.1 285,377.3 295,373.5 302.5,370.5 310.1,370 317.5,373.5 327.5,381.1 337.5,389.8 345.1,394.8 350.1,396.5 357.5,403.5 367.5,408.5 375.2,414.9 382.5,419.1 387.5,420.5 400.2,421.5 410.3,416.5 420.3,412.4 427.5,409.1 437.5,409.5 447.5,410.1 452.5,411.5 462.5,411.1 470.5,412.4 482.5,414.1 492.5,418.5 497.5,421.1 505.5,422.4 512.9,425.5 523,427.5 532,429.1 539.5,432.4 548.3,434.9 554.5,433.1 560.5,433.5 574.5,429.1 589.5,424.9 604.5,421.1 614.5,419.9 624.5,417.4 639.5,416.1 649.5,414.1 662.2,412.4 672.3,408.5 679.5,407.5 694.5,407.5 702.3,409.1 709.5,410.5 722.3,409.5 732.4,410.1 749.9,408.5 764.9,408.1 780,408.5 794,410.5 806.5,412.1 816.5,411.5 826.5,409.9 844.1,409.9 854.1,413.1 866.5,416.1 872.9,415.5 881.5,412.4 891.5,408.5 901.5,407.1 911.5,407.1 916.5,408.1 924,408.1" fill="none" stroke="#ff0000" stroke-width="1"/>
<polyline points="0.5,395.5 8,394.8 20.5,397.3 33,394.8 50.5,388.5 68.1,384.8 88.1,378.5 105.5,374.8 125.5,372.3 140.5,371 155.5,371.5 170.5,374.8 185.5,379.8 200.5,383.5 215.5,386.5 230.5,389.1 245.9,391.5 261,394.1 272.5,394.8 285,390.5 295,388.5 305.1,389.8 317.5,392.3 327.5,397.3 337.5,403.5 350.1,409.9 362.5,416.1 375.2,422.4 385.2,428.1 392.5,428.5 402.5,426.5 412.5,423.5 425.3,418.5 437.5,416.1 452.5,414.1 467.5,413.1 482.5,413.1 492.5,414.9 502.5,416.5 517.9,416.5 524.5,419.4 534.5,421.1 544.5,421.5 557.1,419.9 569.5,415.5 584.5,410.5 599.5,406.5 614.5,402.3 629.5,399.8 644.5,398.1 659.5,395.5 672.3,393.1 687.3,393.1 699.5,394.1 719.5,395.5 739.5,396.5 764.5,396.5 780,398.5 792.5,399.8 811.5,400.5 846.5,401.1 856.5,403.1 866.5,404.8 876.5,403.1 886.5,401.1 896.5,399.8 924,400.5" fill="none" stroke="#ffff00" stroke-width="1"/>
<polyline points="0.5,395.5 20.5,396.5 33,395.5 50.5,393.1 75.5,387.3 100.5,381.1 125.5,376.5 145.5,373.5 170.5,373.5 190.5,377.3 213.5,381.5 238.5,386.1 262.5,389.8 277.5,392.3 300.1,390.5 317.5,391.1 332.5,394.8 347.5,399.8 362.5,406.1 375.2,413.1 387.5,418.5 402.5,422.4 417.5,422.4 432.5,419.9 450.3,417.4 467.5,414.9 487.5,414.9 502.5,415.5 517.9,415.5 524.5,416.5 534.5,417.4 542,419.1 567.1,418.5 584.5,415.5 604.5,411.1 624.5,406.8 644.5,402.3 664.5,399.1 684.5,395.5 699.5,394.8 729.5,394.8 739.5,395.5 759.9,395.5 764.9,396.5 785,396.5 792.5,398.1 804,398.1 821.5,399.8 846.5,400.5 861.5,402.1 881.5,402.1 891.5,400.5 924,399.8" fill="none" stroke="#0000ff" stroke-width="1"/>
<path d="M0 480.5H924" stroke="#0000ff" stroke-width="1"/>
<path d="M0 522.5H924" stroke="#ff0000" stroke-width="1"/>
<polyline points="0.5,480.3 10.5,479.1 25.5,487.1 38.1,479.1 50.5,474.5 60.5,474.5 73.1,477.8 85.5,476.1 95.5,472.8 105.5,474.5 118.2,477.1 135.5,474.5 145.5,476.1 155.5,480.3 163.3,485.3 170.5,489.1 175.5,494.5 185.5,499.5 198.3,502.9 205.5,508.5 213.5,517.9 220.5,521.1 230.5,516.1 240.5,513.5 250.5,516.5 254.5,520.4 262.5,515.4 272.5,509.1 282.5,495.3 290,485.3 297.5,485.3 306.3,491.5 315.1,499.1 325.1,514.1 332.5,522.9 342.5,527.9 352.5,527.1 362.5,529.5 372.5,531.1 382.5,530.4 392.5,527.1 402.5,520.4 412.5,510.4 422.5,497.8 429,492.8 435.3,491.1 447.5,491.1 462.5,491.5 470.4,494.1 477.5,502.9 485.4,511.5 495.4,521.1 502.5,525.4 510.5,525.4 517.9,522.9 525.5,524.1 532,525.4 539.5,527.1 549.5,526.1 557.1,519.1 565.5,512.9 573.3,506.1 579.5,495.3 584.5,486.5 590.5,482.8 599.5,480.3 609.5,476.1 624.5,473.5 634.5,472 644.5,474.5 657.2,474 669.5,474 681,476.5 689.5,484.1 698.5,492.8 709.5,494.5 722.3,496.5 734.9,499.1 744.9,503.5 752.4,504.1 762.5,499.1 771.2,494.5 780,494.5 787.5,497.8 799,502.9 806.5,508.5 812.8,512.1 821.5,502.9 830.3,497.8 841.5,502.9 851.5,512.9 859.1,522.9 864.1,525.4 871.5,522.9 881.5,505.4 891.5,489.1 897.9,482.8 902.9,482.8 909.2,487.8 916.5,494.1 921.5,496.1 924,495.3" fill="none" stroke="#ff0000" stroke-width="1"/>
<polyline points="0.5,480.3 8,474 15,492.8 21.8,489.1 26.8,479.1 33.1,477.1 38.1,477.8 45.5,474 56.8,473.5 68.1,480.3 74.4,475.3 85.5,474.5 93.2,472 100.5,473.5 110.5,477.8 118.2,477.8 130.5,473.5 140.5,477.8 150.5,480.3 158.3,482.8 164.5,491.5 170.5,492.8 177.1,501.1 183.3,501.5 189.5,504.5 194.5,500.3 200.5,511.5 213.5,524.1 220.5,517.9 230.5,512.9 237.2,512.1 248.5,520.4 254.5,521.1 261,508.5 272.5,508.5 278.5,489.1 285,481.5 291.3,486.5 297.5,486.5 303.5,495.3 308.5,500.3 315.1,501.5 321.4,519.1 327.5,524.5 333.9,527.9 350.2,526.5 357.5,531.1 362.5,531.5 370.2,529.5 375.2,529.5 380.2,531.5 386.5,529.1 392.5,522.9 399,521.5 407.5,507.9 412.5,502.9 416.5,500.3 422.5,489.1 429,490.3 435.3,493.5 440.3,491.1 447.5,491.5 452.5,492.8 460.3,492.1 465.4,491.5 476.5,511.5 485.4,516.5 495.4,526.1 500.4,527.1 506.5,521.5 511.5,523.5 517.9,522.9 525,529.5 530.5,524.1 537,527.9 543.3,527.9 549.5,520.4 555.5,513.5 560.5,515.4 567.1,509.1 573.3,494.1 579.5,484.1 584.5,479.1 590.5,482.8 597.1,480.3 609.5,472 615.5,475.3 627.2,471 633.5,472.8 639.5,477.1 644.5,475.3 651,471 657.2,476.1 669.5,474 676,476.5 681,476.1 687.3,490.3 693.5,494.5 699.5,492.8 709.5,496.5 717.3,493.5 723.5,499.5 729.9,498.5 736.1,500.3 741.1,506.5 747.4,504.5 753.5,499.5 764.9,496.5 771.2,491.1 777.5,496.5 790,500.3 795.3,501.5 801.5,510.4 807,514.5 812.8,509.1 819.1,494.5 824.1,494.5 831.5,502.1 837.8,506.1 842.8,504.1 849.1,520.4 855.4,522.9 861.1,529.5 867.9,522.9 877.9,499.5 884.2,493.5 890.5,480.3 896.5,477.8 901.5,486.5 909.2,492.8 915.5,500.3 921.5,494.1 924,493.5" fill="none" stroke="#0000ff" stroke-width="1"/>
<path d="M924.5 22V575M0 547.5H983M925 40.5H930M925 79.5H930M925 118.5H930M925 157.5H930M925 196.5H930M925 235.5H930M925 271.5H930M925 309.5H930M925 370.5H930M925 406.5H930M925 467.5H930M925 505.5H930M38.5 548V552M134.5 548V552M230.5 548V552M326.5 548V552M422.5 548V552M530.5 548V552M626.5 548V552M722.5 548V552M818.5 548V552M914.5 548V552" stroke="#000" stroke-width="1" fill="none"/>
<rect x="927.5" y="334.5" width="39" height="14" fill="#fff" stroke="#000" stroke-width="1"/>
<path d="M983 24.5H972.5V36.5H983" fill="#fff" stroke="#9a9a9a" stroke-width="1"/>
<path d="M983 24.5H972.5V36.5" fill="none" stroke="#c8c8c8" stroke-width="1"/>
<path d="M974 28h11l-5.5 6z" fill="#808080"/><path d="M974 28.5h11" stroke="#000" stroke-width="1"/><path d="M974.5 29l5 5.5l5-5.5" stroke="#222" stroke-width="1" fill="none" shape-rendering="auto"/>
<path d="M983 255.5H972.5V267.5H983" fill="#fff" stroke="#9a9a9a" stroke-width="1"/>
<path d="M983 255.5H972.5V267.5" fill="none" stroke="#c8c8c8" stroke-width="1"/>
<path d="M974 259h11l-5.5 6z" fill="#808080"/><path d="M974 259.5h11" stroke="#000" stroke-width="1"/><path d="M974.5 260l5 5.5l5-5.5" stroke="#222" stroke-width="1" fill="none" shape-rendering="auto"/>
<path d="M983 353.5H972.5V365.5H983" fill="#fff" stroke="#9a9a9a" stroke-width="1"/>
<path d="M983 353.5H972.5V365.5" fill="none" stroke="#c8c8c8" stroke-width="1"/>
<path d="M974 357h11l-5.5 6z" fill="#808080"/><path d="M974 357.5h11" stroke="#000" stroke-width="1"/><path d="M974.5 358l5 5.5l5-5.5" stroke="#222" stroke-width="1" fill="none" shape-rendering="auto"/>
<path d="M983 451.5H972.5V463.5H983" fill="#fff" stroke="#9a9a9a" stroke-width="1"/>
<path d="M983 451.5H972.5V463.5" fill="none" stroke="#c8c8c8" stroke-width="1"/>
<path d="M974 455h11l-5.5 6z" fill="#808080"/><path d="M974 455.5h11" stroke="#000" stroke-width="1"/><path d="M974.5 456l5 5.5l5-5.5" stroke="#222" stroke-width="1" fill="none" shape-rendering="auto"/>
<g class="tj" shape-rendering="auto"><text x="0" y="34.5">日経</text><text x="120" y="34.5">分</text><text x="313" y="34.5">一目均衡表</text><text x="471" y="34.5">移動平均</text><text x="616" y="34.5">移動平均</text><text x="769" y="34.5">移動平均</text><text x="0" y="48.5">移動平均</text><text x="146" y="48.5">移動平均</text><text x="292" y="48.5">移動平均</text><text x="437" y="48.5">移動平均</text><text x="589" y="48.5">移動平均</text><text x="734" y="48.5">移動平均</text><text x="0" y="265.5">出来高</text><text x="121" y="364.5">移動平均</text><text x="0" y="462">スロー・ストキャスティクス</text><text x="935" y="345.5" text-anchor="middle" style="font-size:14px">×</text></g>
<g class="t" transform="scale(0.8 1)" shape-rendering="auto"><text y="35"><tspan x="33.75 41.25 48.75">225</tspan><tspan class="l" x="56.25 63.75 71.25 78.75">mini</tspan> <tspan x="93.75 101.25">13</tspan><tspan class="l" x="108.75">/</tspan><tspan x="116.25 123.75">12</tspan><tspan class="l" x="131.25">(</tspan> <tspan x="146.25">5</tspan><tspan class="l" x="168.75">,</tspan> <tspan x="183.75 191.25 198.75 206.25">2013</tspan><tspan class="l" x="213.75">/</tspan><tspan x="221.25 228.75">09</tspan><tspan class="l" x="236.25">/</tspan><tspan x="243.75 251.25">14</tspan> <tspan class="l" x="266.25">-</tspan> <tspan x="281.25 288.75 296.25 303.75">2013</tspan><tspan class="l" x="311.25">/</tspan><tspan x="318.75 326.25">09</tspan><tspan class="l" x="333.75">/</tspan><tspan x="341.25 348.75">19</tspan> <tspan class="l" x="363.75">)</tspan></text><text y="35"><tspan class="l" x="470">(</tspan> <tspan x="485">9</tspan><tspan class="l" x="492.5">,</tspan> <tspan x="507.5 515">26</tspan><tspan class="l" x="522.5">,</tspan> <tspan x="537.5 545">52</tspan> <tspan class="l" x="560">)</tspan></text><text y="35"><tspan class="l" x="652.5">(</tspan> <tspan class="l" x="667.5 675 682.5 690 697.5 705">Close,</tspan> <tspan x="720 727.5">10</tspan> <tspan class="l" x="742.5">)</tspan></text><text y="35"><tspan class="l" x="833.75">(</tspan> <tspan class="l" x="848.75 856.25 863.75 871.25 878.75 886.25">Close,</tspan> <tspan x="901.25 908.75 916.25">150</tspan> <tspan class="l" x="931.25">)</tspan></text><text y="35"><tspan class="l" x="1025">(</tspan> <tspan class="l" x="1040 1047.5 1055 1062.5 1070 1077.5">Close,</tspan> <tspan x="1092.5 1100">75</tspan> <tspan class="l" x="1115">)</tspan></text><text y="49"><tspan class="l" x="63.75">(</tspan> <tspan class="l" x="78.75 86.25 93.75 101.25 108.75 116.25">Close,</tspan> <tspan x="131.25 138.75">25</tspan> <tspan class="l" x="153.75">)</tspan></text><text y="49"><tspan class="l" x="246.25">(</tspan> <tspan class="l" x="261.25 268.75 276.25 283.75 291.25 298.75">Close,</tspan> <tspan x="313.75 321.25">75</tspan> <tspan class="l" x="336.25">)</tspan></text><text y="49"><tspan class="l" x="428.75">(</tspan> <tspan class="l" x="443.75 451.25 458.75 466.25 473.75 481.25">Close,</tspan> <tspan x="496.25 503.75">20</tspan> <tspan class="l" x="518.75">)</tspan></text><text y="49"><tspan class="l" x="610">(</tspan> <tspan class="l" x="625 632.5 640 647.5 655 662.5">Close,</tspan> <tspan x="677.5 685 692.5">100</tspan> <tspan class="l" x="707.5">)</tspan></text><text y="49"><tspan class="l" x="800">(</tspan> <tspan class="l" x="815 822.5 830 837.5 845 852.5">Close,</tspan> <tspan x="867.5 875">40</tspan> <tspan class="l" x="890">)</tspan></text><text y="49"><tspan class="l" x="981.25">(</tspan> <tspan class="l" x="996.25 1003.75 1011.25 1018.75 1026.25 1033.75">Close,</tspan> <tspan x="1048.75 1056.25 1063.75">150</tspan> <tspan class="l" x="1078.75">)</tspan></text><text y="365"><tspan class="l" x="3.75 11.25 18.75 26.25 33.75">MACD(</tspan> <tspan x="48.75 56.25">12</tspan><tspan class="l" x="63.75">,</tspan> <tspan x="78.75 86.25">26</tspan><tspan class="l" x="93.75">,</tspan> <tspan x="108.75">9</tspan> <tspan class="l" x="123.75">)</tspan></text><text y="365"><tspan class="l" x="215">(</tspan> <tspan class="l" x="230 237.5 245 252.5 260 267.5">Close,</tspan> <tspan x="282.5">5</tspan> <tspan class="l" x="297.5">)</tspan></text><text y="463"><tspan class="l" x="198.75">(</tspan> <tspan x="213.75 221.25">14</tspan><tspan class="l" x="228.75">,</tspan> <tspan x="243.75">3</tspan><tspan class="l" x="251.25">,</tspan> <tspan x="266.25 273.75">80</tspan><tspan class="l" x="281.25">,</tspan> <tspan x="296.25 303.75">20</tspan> <tspan class="l" x="318.75">)</tspan></text><text y="346"><tspan x="1187.5 1195 1202.5">100</tspan></text><text y="46"><tspan x="1169.38 1176.88">14</tspan><tspan class="l" x="1184.38">,</tspan><tspan x="1191.88 1199.38 1206.88">575</tspan></text><text y="85"><tspan x="1169.38 1176.88">14</tspan><tspan class="l" x="1184.38">,</tspan><tspan x="1191.88 1199.38 1206.88">525</tspan></text><text y="124"><tspan x="1169.38 1176.88">14</tspan><tspan class="l" x="1184.38">,</tspan><tspan x="1191.88 1199.38 1206.88">475</tspan></text><text y="163"><tspan x="1169.38 1176.88">14</tspan><tspan class="l" x="1184.38">,</tspan><tspan x="1191.88 1199.38 1206.88">425</tspan></text><text y="202"><tspan x="1169.38 1176.88">14</tspan><tspan class="l" x="1184.38">,</tspan><tspan x="1191.88 1199.38 1206.88">375</tspan></text><text y="241"><tspan x="1169.38 1176.88">14</tspan><tspan class="l" x="1184.38">,</tspan><tspan x="1191.88 1199.38 1206.88">325</tspan></text><text y="277"><tspan x="1169.38 1176.88 1184.38">195</tspan><tspan class="l" x="1191.88">.</tspan><tspan x="1199.38 1206.88">00</tspan></text><text y="315"><tspan x="1169.38 1176.88">80</tspan><tspan class="l" x="1184.38">.</tspan><tspan x="1191.88 1199.38">00</tspan></text><text y="376"><tspan x="1169.38 1176.88">35</tspan><tspan class="l" x="1184.38">.</tspan><tspan x="1191.88 1199.38">00</tspan></text><text y="412"><tspan class="l" x="1169.38">-</tspan><tspan x="1176.88">5</tspan><tspan class="l" x="1184.38">.</tspan><tspan x="1191.88 1199.38">00</tspan></text><text y="473"><tspan x="1169.38 1176.88 1184.38">100</tspan><tspan class="l" x="1191.88">.</tspan><tspan x="1199.38 1206.88">00</tspan></text><text y="511"><tspan x="1169.38 1176.88">45</tspan><tspan class="l" x="1184.38">.</tspan><tspan x="1191.88 1199.38">00</tspan></text></g>
<svg x="0" y="0" width="924" height="580"><g class="t" transform="scale(0.8 1)" shape-rendering="auto"><text y="567"><tspan x="50.62 58.12">09</tspan><tspan class="l" x="65.62">:</tspan><tspan x="73.12 80.62">20</tspan></text><text y="567"><tspan x="170.62 178.12">10</tspan><tspan class="l" x="185.62">:</tspan><tspan x="193.12 200.62">40</tspan></text><text y="567"><tspan x="290.62 298.12">12</tspan><tspan class="l" x="305.62">:</tspan><tspan x="313.12 320.62">00</tspan></text><text y="567"><tspan x="410.62 418.12">13</tspan><tspan class="l" x="425.62">:</tspan><tspan x="433.12 440.62">20</tspan></text><text y="567"><tspan x="530.62 538.12">14</tspan><tspan class="l" x="545.62">:</tspan><tspan x="553.12 560.62">40</tspan></text><text y="567"><tspan x="665.62 673.12">17</tspan><tspan class="l" x="680.62">:</tspan><tspan x="688.12 695.62">20</tspan></text><text y="567"><tspan x="785.62 793.12">18</tspan><tspan class="l" x="800.62">:</tspan><tspan x="808.12 815.62">40</tspan></text><text y="567"><tspan x="905.62 913.12">20</tspan><tspan class="l" x="920.62">:</tspan><tspan x="928.12 935.62">00</tspan></text><text y="567"><tspan x="1025.62 1033.12">21</tspan><tspan class="l" x="1040.62">:</tspan><tspan x="1048.12 1055.62">20</tspan></text><text y="567"><tspan x="1145.62 1153.12">22</tspan><tspan class="l" x="1160.62">:</tspan><tspan x="1168.12 1175.62">40</tspan></text></g></svg>
</svg>

</div>
</body>
</html>
